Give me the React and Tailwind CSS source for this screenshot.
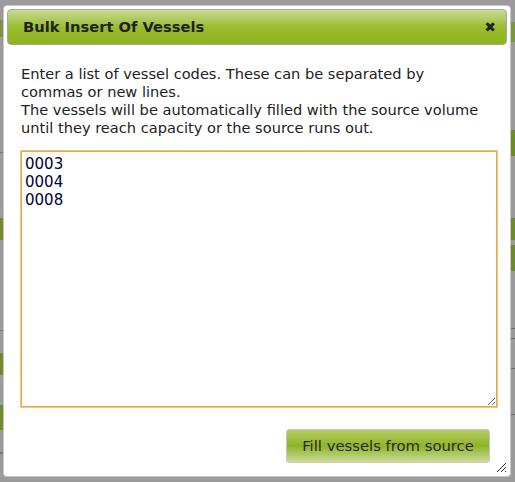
function Strip({ className }) {
  return <div className={className} />;
}

export default function App() {
  return (
    <div className="flex w-[515px] h-[482px] bg-[#9b9b9b] overflow-hidden" style={{ fontFamily: "'DejaVu Sans', Verdana, sans-serif" }}>
      {/* left remnants of underlying page */}
      <div className="flex flex-col w-[3px] shrink-0">
        <Strip className="mt-[20px] h-[17px] bg-[#7d9440]" />
        <Strip className="mt-[115px] h-[1px] bg-[#777]" />
        <Strip className="mt-[65px] h-[22px] bg-[#6f8a2a]" />
        <Strip className="mt-[90px] h-[1px] bg-[#777]" />
        <Strip className="mt-[22px] h-[22px] bg-[#6f8a2a]" />
        <Strip className="mt-[30px] h-[25px] bg-[#6f8a2a]" />
        <Strip className="mt-[22px] h-[2px] bg-[#777]" />
      </div>

      {/* dialog */}
      <div className="relative mt-[5px] w-[508px] h-[472px] shrink-0 bg-white border border-[#c8c8c8] rounded-[4px] p-[3px] flex flex-col">
        <div className="h-[36px] rounded-[4px] border border-[#a8a8a8] bg-gradient-to-b from-[#c8db8e] via-[#9cbc2e] to-[#8db31f] flex items-center justify-between pl-[15px] pr-[10px]">
          <span className="text-[14.7px] font-bold text-[#222]">Bulk Insert Of Vessels</span>
          <span className="text-[14px] font-bold text-[#222] leading-none">✖</span>
        </div>
        <div className="flex flex-col px-[14px] pt-[20px]">
          <p className="w-[462px] text-[14.6px] leading-[18px] text-[#222]">
            Enter a list of vessel codes. These can be separated by commas or new lines.
            <br />
            The vessels will be automatically filled with the source volume until they reach capacity or the source runs out.
          </p>
          <textarea
            className="mt-[14px] w-[476px] h-[256px] border border-[#e0a94a] outline outline-1 outline-[#f0c880] text-[15px] leading-[18px] text-[#000033] px-[3px] pt-[3px] resize"
            defaultValue={"0003\n0004\n0008"}
            style={{ fontFamily: "'DejaVu Sans', Verdana, sans-serif" }}
          />
          <div className="flex justify-end mt-[22px] pr-[3px]">
            <button className="h-[34px] w-[204px] rounded-[3px] border border-[#c8c8c8] bg-gradient-to-b from-[#b5cc5e] via-[#8fb424] to-[#cadd94] text-[14.8px] text-[#2a2a2a]">
              Fill vessels from source
            </button>
          </div>
        </div>
        <svg className="absolute right-[3px] bottom-[3px]" width="12" height="12" viewBox="0 0 12 12">
          <path d="M11 2 L2 11 M11 6 L6 11 M11 10 L10 11" stroke="#333" strokeWidth="1" />
        </svg>
      </div>

      {/* right remnants */}
      <div className="flex flex-col w-[4px] shrink-0">
        <Strip className="mt-[22px] h-[20px] bg-[#7d9440]" />
        <Strip className="mt-[88px] h-[26px] bg-[#6f8a2a]" />
        <Strip className="mt-[62px] h-[22px] bg-[#6f8a2a]" />
        <Strip className="mt-[5px] h-[26px] bg-[#6f8a2a]" />
        <Strip className="mt-[57px] h-[1px] bg-[#666]" />
        <Strip className="mt-[9px] h-[1px] bg-[#666]" />
        <Strip className="mt-[29px] h-[1px] bg-[#666]" />
        <Strip className="mt-[45px] h-[1px] bg-[#666]" />
      </div>
    </div>
  );
}
